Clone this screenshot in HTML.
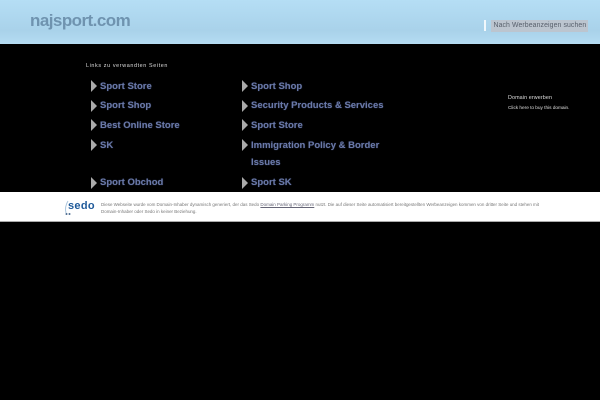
<!DOCTYPE html>
<html><head><meta charset="utf-8"><style>
html,body{margin:0;padding:0;background:#000}
body{width:600px;height:400px;overflow:hidden;position:relative;font-family:"Liberation Sans",sans-serif}
.a{position:absolute;white-space:nowrap}
#top{left:0;top:0;width:600px;height:44px;background:linear-gradient(#b5def5,#a9d2ea 70%,#b5dcf2)}
.l{font-size:9.500px;font-weight:bold;letter-spacing:0;color:#6a79a8;line-height:12px;text-shadow:0 0 1px #3b4770}
.tri{position:absolute;width:0;height:0;border-left:6px solid #aaa;border-top:6px solid transparent;border-bottom:6px solid transparent}
.s{font-size:5.400px;color:#ddd;line-height:7px}
.f{font-size:4.490px;color:#777;line-height:7px}
</style></head><body>
<div class="a" id="top"></div>
<div class="a" style="left:30px;top:9px;font-size:17px;font-weight:bold;color:#6f93af;letter-spacing:-.55px;line-height:24px">najsport.com</div>
<div class="a" style="left:484px;top:20px;width:2px;height:11px;background:#f0f8fc"></div>
<div class="a" style="left:491px;top:20px;width:97px;height:12px;background:#bcc5cf"></div>
<div class="a" style="left:493.500px;top:20px;font-size:6.900px;line-height:12px;color:#58606c;letter-spacing:.1px">Nach Werbeanzeigen suchen</div>

<div class="a s" style="left:86px;top:63px;letter-spacing:.62px">Links zu verwandten Seiten</div>

<div class="tri" style="left:91px;top:80px"></div><div class="a l" style="left:100px;top:81px">Sport Store</div>
<div class="tri" style="left:91px;top:100px"></div><div class="a l" style="left:100px;top:100px">Sport Shop</div>
<div class="tri" style="left:91px;top:119px"></div><div class="a l" style="left:100px;top:120px">Best Online Store</div>
<div class="tri" style="left:91px;top:139px"></div><div class="a l" style="left:100px;top:140px">SK</div>
<div class="tri" style="left:91px;top:177px"></div><div class="a l" style="left:100px;top:177px">Sport Obchod</div>

<div class="tri" style="left:242px;top:80px"></div><div class="a l" style="left:251px;top:81px">Sport Shop</div>
<div class="tri" style="left:242px;top:100px"></div><div class="a l" style="left:251px;top:100px">Security Products &amp; Services</div>
<div class="tri" style="left:242px;top:119px"></div><div class="a l" style="left:251px;top:120px">Sport Store</div>
<div class="tri" style="left:242px;top:139px"></div><div class="a l" style="left:251px;top:140px">Immigration Policy &amp; Border</div>
<div class="a l" style="left:251px;top:157px">Issues</div>
<div class="tri" style="left:242px;top:177px"></div><div class="a l" style="left:251px;top:177px">Sport SK</div>

<div class="a s" style="left:508px;top:95px;letter-spacing:.1px">Domain erwerben</div>
<div class="a s" style="left:508px;top:105px;font-size:4.800px;letter-spacing:-.05px">Click here to buy this domain.</div>

<div class="a" style="left:0;top:192px;width:600px;height:29px;background:#fff;border-bottom:1px solid #aaa"></div>
<svg class="a" style="left:63px;top:198px" width="36" height="20" viewBox="0 0 36 20"><path d="M5 3C2.500 7 2 11 3 15" fill="none" stroke="#a9c4dc" stroke-width="1"/><circle cx="3.500" cy="16" r="1" fill="#4a6a90"/><circle cx="6.500" cy="16" r="1" fill="#4a6a90"/></svg>
<div class="a" style="left:68px;top:199px;font-size:11px;font-weight:bold;color:#1f5a9a;line-height:14px;letter-spacing:.3px">sedo</div>
<div class="a f" style="left:101px;top:201px">Diese Webseite wurde vom Domain-Inhaber dynamisch generiert, der das Sedo <span style="text-decoration:underline;color:#667">Domain Parking Programm</span> nutzt. Die auf dieser Seite automatisiert bereitgestellten Werbeanzeigen kommen von dritter Seite und stehen mit</div>
<div class="a f" style="left:101px;top:208px">Domain-Inhaber oder Sedo in keiner Beziehung.</div>
</body></html>
